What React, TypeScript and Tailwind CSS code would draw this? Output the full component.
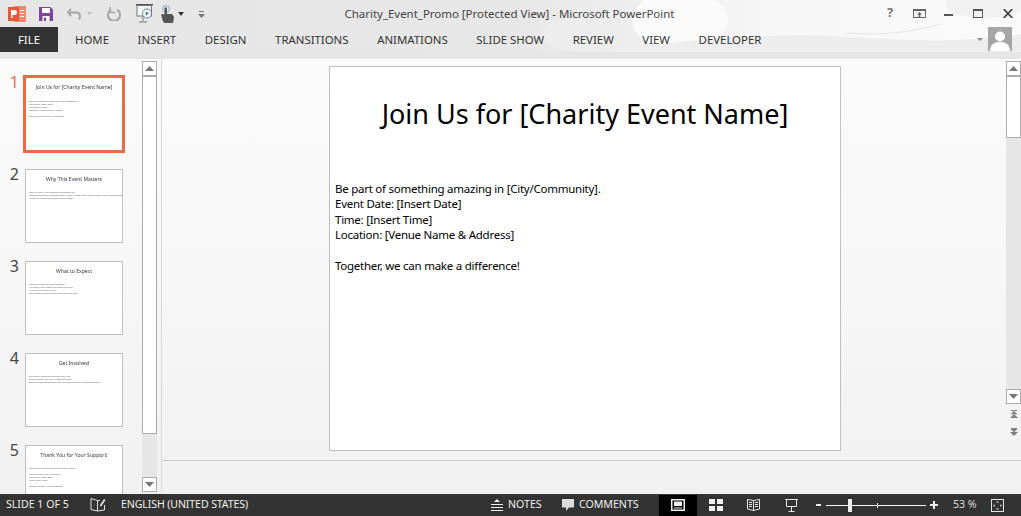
import React from 'react';

const FONT = '"Noto Sans", "Open Sans", sans-serif';

const tabs = ['HOME', 'INSERT', 'DESIGN', 'TRANSITIONS', 'ANIMATIONS', 'SLIDE SHOW', 'REVIEW', 'VIEW', 'DEVELOPER'];

const thumbs = [
  {
    title: 'Join Us for [Charity Event Name]',
    lines: ['Be part of something amazing in [City/Community].', 'Event Date: [Insert Date]', 'Time: [Insert Time]', 'Location: [Venue Name & Address]', '', 'Together, we can make a difference!'],
  },
  {
    title: 'Why This Event Matters',
    lines: ['Every bit helps. Your presence can change lives.', 'Together we support those who need it most, raising funds, sharing hope, and building stronger', 'futures for families and communities in need.'],
  },
  {
    title: 'What to Expect',
    lines: ['Inspiring stories and guest speakers', 'Live music, food, games, and family activities', 'A raffle with amazing prizes', 'Great opportunities to meet people and give back'],
  },
  {
    title: 'Get Involved',
    lines: ['Buy tickets, donate or volunteer your time', 'Share the event with your friends and family', 'Become a sponsor and show your business cares for the local community'],
  },
  {
    title: 'Thank You for Your Support!',
    lines: ['Together we can bring change to those in need.', '', 'Tickets on sale now at [Website]', 'Event Date: [Insert Date]', 'Time: [Insert Time]', '', 'Spread the word: #[EventHashtag]'],
  },
];

function Thumb({ n, active }: { n: number; active?: boolean }) {
  const t = thumbs[n];
  return (
    <div className="flex h-[92px] shrink-0">
      <div className={`w-[23px] pr-[4px] text-right text-[16px] leading-[15px] ${active ? 'text-[#ee6a47]' : 'text-[#444444]'}`}>{n + 1}</div>
      <div
        className={`bg-white box-border shrink-0 overflow-hidden ${active ? 'border-[3px] border-[#ee6a47] w-[102px] h-[78px] pt-[5px] px-[2px]' : 'border border-[#c0c0c0] ml-[2px] w-[98px] h-[74px] pt-[5px] px-[2px] mt-[2px]'}`}
      >
        <div className="text-[5.1px] leading-[8px] text-center text-[#333344] whitespace-nowrap [filter:blur(0.3px)]">{t.title}</div>
        <div className={`${active ? 'mt-[9px]' : 'mt-[8px]'} pl-[1px]`}>
          {t.lines.map((l, i) => (
            <div key={i} className="text-[2.1px] leading-[3px] h-[3px] text-[#555555] whitespace-nowrap">{l}</div>
          ))}
        </div>
      </div>
    </div>
  );
}

function ScrollButton({ down }: { down?: boolean }) {
  return (
    <div className="w-[15px] h-[15px] shrink-0 box-border border border-[#ababab] bg-white flex items-center justify-center">
      <svg width="9" height="5" viewBox="0 0 9 5">
        <path d={down ? 'M0 0H9L4.5 5Z' : 'M0 5H9L4.5 0Z'} fill="#777777" />
      </svg>
    </div>
  );
}

export default function App() {
  return (
    <div className="w-[1021px] h-[516px] flex flex-col overflow-hidden bg-[#f3f3f3] text-[#262626]" style={{ fontFamily: FONT }}>
      {/* 리본 상단 */}
      <div className="relative h-[59px] shrink-0 bg-[#e6e6e6]">
        <svg className="absolute inset-0" width="1021" height="52" viewBox="0 0 1021 52">
          <defs>
            <linearGradient id="fade" x1="0" x2="1" y1="0" y2="0">
              <stop offset="0" stopColor="#e6e6e6" />
              <stop offset="0.5" stopColor="#e7e7e7" />
              <stop offset="0.62" stopColor="#eeeeee" />
              <stop offset="0.75" stopColor="#f6f6f6" />
              <stop offset="1" stopColor="#fbfbfb" />
            </linearGradient>
          </defs>
          <rect width="1021" height="52" fill="url(#fade)" />
          <ellipse cx="575" cy="35" rx="34" ry="16" fill="#ededed" />
          <ellipse cx="680" cy="20" rx="48" ry="30" fill="#fbfbfb" />
          <path d="M600 52C680 40 760 32 850 37C900 40 960 44 1021 34V52Z" fill="#ededed" />
          <path d="M846 33C880 36 915 32 940 24" fill="none" stroke="#e6e6e6" />
          <ellipse cx="985" cy="4" rx="40" ry="14" fill="#f1f1f1" />
        </svg>

        {/* 빠른 실행 도구 */}
        <div className="relative h-[27px] flex items-center">
          <svg className="ml-[8px]" width="18" height="16" viewBox="0 0 18 16">
            <rect x="6" y="0" width="12" height="16" fill="#f08a6c" />
            <rect x="0" y="1" width="11" height="14" fill="#e8583a" />
            <path d="M3 4H6.5A2 2 0 0 1 6.5 9H4.4V12H3Z" fill="#ffffff" />
            <rect x="12" y="4" width="4" height="1" fill="#ffffff" />
            <rect x="12" y="7" width="4" height="1" fill="#ffffff" />
            <rect x="12" y="10" width="4" height="1" fill="#ffffff" />
          </svg>
          <svg className="ml-[13px]" width="14" height="14" viewBox="0 0 14 14">
            <path d="M0 0H11.5L14 2.5V14H0Z" fill="#80449b" />
            <rect x="3" y="1" width="8" height="5" fill="#ffffff" />
            <rect x="3.5" y="9" width="7" height="5" fill="#ffffff" />
            <rect x="5" y="10.5" width="2" height="3.5" fill="#80449b" />
          </svg>
          <svg className="ml-[14px]" width="15" height="14" viewBox="0 0 15 14" fill="none">
            <path d="M4 2L1 5.5L4 9" stroke="#a6a6a6" strokeWidth="2" />
            <path d="M1 5.5H9C13 5.5 14 9 12 12.5" stroke="#a6a6a6" strokeWidth="2" />
          </svg>
          <svg className="ml-[5px]" width="5" height="3" viewBox="0 0 5 3">
            <path d="M0 0H5L2.5 3Z" fill="#bdbdbd" />
          </svg>
          <svg className="ml-[15px]" width="14" height="14" viewBox="0 0 14 14" fill="none">
            <path d="M10 2.7A6 6 0 1 1 4 2.7" stroke="#a6a6a6" strokeWidth="2" />
            <path d="M3.2 0V5.5H8" fill="none" stroke="#a6a6a6" strokeWidth="1.6" />
          </svg>
          <svg className="ml-[15px]" width="17" height="19" viewBox="0 0 17 19" fill="none">
            <rect x="0" y="0" width="17" height="1.5" fill="#555555" />
            <rect x="1" y="1.5" width="14.5" height="10.5" stroke="#777777" fill="#f4f4f4" />
            <circle cx="11" cy="9.5" r="4.5" fill="#ffffff" stroke="#5b7f9e" />
            <path d="M9.7 7.2L13 9.5L9.7 11.8Z" fill="#4d7ea8" />
            <path d="M7 12V17M3 18H11" stroke="#777777" />
          </svg>
          <svg className="ml-[7px]" width="14" height="18" viewBox="0 0 14 18">
            <circle cx="6" cy="4" r="3.5" fill="none" stroke="#8ab0cc" />
            <rect x="4.5" y="2.5" width="2.5" height="8" fill="#555555" />
            <path d="M4.5 9L1 9.5L3 16.5L4.5 18H13L14 12L12 9Z" fill="#555555" />
          </svg>
          <svg className="ml-[4px]" width="6" height="4" viewBox="0 0 6 4">
            <path d="M0 0H6L3 4Z" fill="#333333" />
          </svg>
          <svg className="ml-[14px] mt-[2px]" width="7" height="7" viewBox="0 0 7 7">
            <rect x="1" y="0" width="5" height="1" fill="#777777" />
            <path d="M0 3H7L3.5 7Z" fill="#777777" />
          </svg>
          <div className="absolute left-0 right-0 top-[5px] pr-[2px] text-center text-[11.5px] tracking-[-0.03px] leading-[18px] text-[#444444] whitespace-nowrap">Charity_Event_Promo [Protected View] - Microsoft PowerPoint</div>
          {/* 창 버튼 */}
          <div className="absolute top-0 right-0 h-[27px] w-[143px]">
            <div className="absolute left-[9px] top-[3px] text-[13px] leading-[18px] font-bold text-[#777777]">?</div>
            <svg className="absolute left-[35px] top-[9px]" width="13" height="9" viewBox="0 0 13 9" fill="none">
              <rect x="0.5" y="0.5" width="12" height="8" stroke="#666666" />
              <rect x="0" y="0" width="13" height="2" fill="#666666" />
              <path d="M6.5 3L9 5.5H7.3V8H5.7V5.5H4Z" fill="#666666" />
            </svg>
            <div className="absolute left-[66px] top-[14px] w-[9px] h-[2px] bg-[#555555]" />
            <div className="absolute left-[95px] top-[9px] w-[10px] h-[9px] border border-t-[2px] border-[#555555]" />
            <svg className="absolute left-[125px] top-[9px]" width="10" height="9" viewBox="0 0 10 9">
              <path d="M0.7 0L9.3 9M9.3 0L0.7 9" stroke="#444444" strokeWidth="1.8" />
            </svg>
          </div>
        </div>

        {/* 탭 */}
        <div className="relative h-[25px] flex items-center text-[11.4px] text-[#333333]">
          <div className="w-[58px] h-[25px] bg-[#333333] text-white flex items-center justify-center">FILE</div>
          <div className="flex ml-[17px] gap-[28.6px]">
            {tabs.map((t) => (
              <span key={t} className="whitespace-nowrap leading-[25px]">{t}</span>
            ))}
          </div>
          <svg className="absolute left-[977px] top-[11px]" width="6" height="3" viewBox="0 0 6 3">
            <path d="M0 0H6L3 3Z" fill="#888888" />
          </svg>
          <div className="absolute left-[988px] top-0 w-[24px] h-[24px] bg-[#a6a6a6] overflow-hidden">
            <svg width="24" height="24" viewBox="0 0 24 24">
              <circle cx="12" cy="9.5" r="5" fill="#ffffff" />
              <path d="M2 24C2 17 7 15 12 15C17 15 22 17 22 24Z" fill="#ffffff" />
            </svg>
          </div>
        </div>
      </div>

      {/* 본문 */}
      <div className="flex-1 min-h-0 flex bg-gradient-to-b from-[#fbfbfb] via-[#f7f7f7] to-[#f1f1f1]">
        {/* 슬라이드 목록 */}
        <div className="w-[142px] shrink-0 pt-[16px] overflow-hidden flex flex-col">
          {thumbs.map((_, i) => (
            <Thumb key={i} n={i} active={i === 0} />
          ))}
        </div>
        <div className="w-[15px] shrink-0 pt-[2px] pb-[2px] flex flex-col">
          <ScrollButton />
          <div className="flex-1 min-h-0 flex flex-col bg-[#e6e6e6]">
            <div className="h-[358px] box-border border border-[#ababab] bg-white" />
          </div>
          <ScrollButton down />
        </div>
        <div className="w-[4px] shrink-0" />
        <div className="w-px shrink-0 bg-[#d8d8d8] mb-[2px]" />

        {/* 슬라이드 편집 */}
        <div className="flex-1 min-w-0 flex flex-col">
          <div className="h-[402px] shrink-0 flex box-border border-b border-b-[#c8c8c8] ml-px">
            <div className="flex-1 min-w-0 pt-[7px] pl-[166px]">
              <div className="w-[512px] h-[385px] box-border border border-[#c0c0c0] bg-white text-black">
                <div className="pt-[27px] text-center text-[27px] leading-[40px] whitespace-nowrap">Join Us for [Charity Event Name]</div>
                <div className="mt-[47px] pl-[5px] text-[11.5px] tracking-[-0.25px] leading-[15.4px] whitespace-nowrap">
                  <div>Be part of something amazing in [City/Community].</div>
                  <div>Event Date: [Insert Date]</div>
                  <div>Time: [Insert Time]</div>
                  <div>Location: [Venue Name &amp; Address]</div>
                  <div className="h-[15.4px]" />
                  <div>Together, we can make a difference!</div>
                </div>
              </div>
            </div>
            <div className="w-[15px] shrink-0 pt-[2px] flex flex-col items-center">
              <ScrollButton />
              <div className="flex-1 min-h-0 w-full flex flex-col bg-[#e6e6e6]">
                <div className="h-[62px] box-border border border-[#ababab] bg-white" />
              </div>
              <ScrollButton down />
              <div className="h-[56px] shrink-0 flex flex-col items-center pt-[6px] gap-[10px]">
                <svg className="block" width="8" height="8" viewBox="0 0 8 8" fill="#808080">
                  <rect x="1" y="0" width="6" height="1" />
                  <path d="M4 1L7.5 4.2H0.5Z" />
                  <path d="M4 4L8 8H0Z" />
                </svg>
                <svg className="block" width="8" height="8" viewBox="0 0 8 8" fill="#808080">
                  <rect x="1" y="0" width="6" height="1" />
                  <path d="M0.5 1H7.5L4 4.2Z" />
                  <path d="M0 4H8L4 8Z" />
                </svg>
              </div>
            </div>
          </div>
          <div className="flex-1" />
        </div>
      </div>

      {/* 상태 표시줄 */}
      <div className="h-[22px] shrink-0 bg-[#333333] text-[#f0f0f0] text-[10.6px] flex items-center">
        <span className="ml-[6px] w-[64px] whitespace-nowrap">SLIDE 1 OF 5</span>
        <svg className="ml-[20px]" width="16" height="14" viewBox="0 0 16 14" fill="none" stroke="#e0e0e0">
          <path d="M7.5 2.5L1 0.5V11.5L7.5 13V2.5ZM7.5 2.5H10M14.5 7V12L7.5 13" />
          <path d="M10 7L14 1L15.5 2L11.5 8L10 8.5Z" fill="#e0e0e0" stroke="none" />
        </svg>
        <span className="ml-[15px] tracking-[-0.12px] whitespace-nowrap">ENGLISH (UNITED STATES)</span>

        <div className="ml-auto mr-[17px] flex items-center">
          <svg width="12" height="12" viewBox="0 0 12 12">
            <path d="M6 0L9 3H3Z" fill="#f0f0f0" />
            <path d="M0 5.5H12M0 8.5H12M0 11.5H12" stroke="#f0f0f0" />
          </svg>
          <span className="ml-[5px] w-[34px] whitespace-nowrap">NOTES</span>
          <svg className="ml-[20px]" width="12" height="12" viewBox="0 0 12 12">
            <path d="M0 0H12V8.5H7L4 12V8.5H0Z" fill="#dcdcdc" />
          </svg>
          <span className="ml-[5px] w-[61px] whitespace-nowrap">COMMENTS</span>
          <div className="ml-[19px] w-[38px] h-[21px] bg-black flex items-center justify-center">
            <svg width="14" height="12" viewBox="0 0 14 12">
              <path d="M0 0H14V12H0ZM1.5 1.5V10.5H12.5V1.5Z" fill="#f0f0f0" />
              <rect x="3" y="2.5" width="8" height="4.5" fill="#f0f0f0" />
              <rect x="3" y="8.5" width="8" height="1" fill="#f0f0f0" />
            </svg>
          </div>
          <svg className="ml-[12px]" width="14" height="12" viewBox="0 0 14 12" fill="#f0f0f0">
            <rect width="6" height="5" /><rect x="8" width="6" height="5" /><rect y="7" width="6" height="5" /><rect x="8" y="7" width="6" height="5" />
          </svg>
          <svg className="ml-[24px]" width="13" height="12" viewBox="0 0 13 12" fill="none" stroke="#e6e6e6">
            <path d="M6.5 1.5L0.5 0.5V10L6.5 11.5L12.5 10V0.5ZM6.5 1.5V11.5M2 3.5H5M2 5.5H5M2 7.5H5M8 3.5H11M8 5.5H11M8 7.5H11" />
          </svg>
          <svg className="ml-[25px]" width="13" height="13" viewBox="0 0 13 13" fill="none" stroke="#e6e6e6">
            <path d="M0 0.5H13M1.5 0.5V7.5H11.5V0.5M6.5 7.5V12M3.5 12.5H9.5" />
          </svg>
          <div className="ml-[18px] w-[5px] h-[2px] bg-[#f0f0f0]" />
          <div className="relative ml-[5px] w-[100px] h-[1px] bg-[#f0f0f0]">
            <div className="absolute left-[22px] -top-[6px] w-[4px] h-[13px] bg-[#f0f0f0]" />
            <div className="absolute left-[51px] -top-[2px] w-px h-[5px] bg-[#f0f0f0]" />
          </div>
          <svg className="ml-[4px]" width="8" height="8" viewBox="0 0 8 8">
            <path d="M3 0H5V3H8V5H5V8H3V5H0V3H3Z" fill="#f0f0f0" />
          </svg>
          <span className="ml-[15px] w-[24px] whitespace-nowrap text-[#dcdcdc]">53 %</span>
          <svg className="ml-[14px]" width="13" height="13" viewBox="0 0 13 13" fill="none" stroke="#e6e6e6">
            <rect x="0.5" y="0.5" width="12" height="12" />
            <path d="M6.5 2L5 3.5H8ZM6.5 11L5 9.5H8ZM2 6.5L3.5 5V8ZM11 6.5L9.5 5V8Z" fill="#e6e6e6" stroke="none" />
          </svg>
        </div>
      </div>
    </div>
  );
}
